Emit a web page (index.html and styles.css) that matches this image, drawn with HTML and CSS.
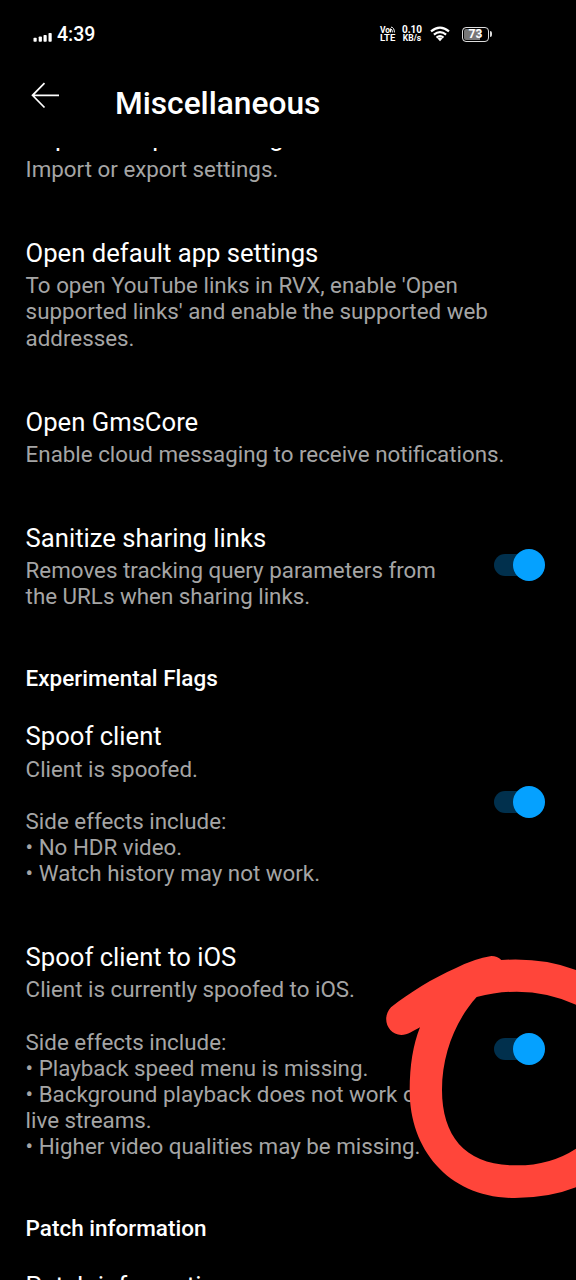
FILE: index.html
```html
<!DOCTYPE html>
<html lang="en">
<head>
<meta charset="utf-8">
<title>Miscellaneous</title>
<link rel="stylesheet" href="styles.css">
</head>
<body>
<div class="screen">
  <div class="status">
    <svg class="signal" width="20" height="12" viewBox="0 0 20 12" fill="#fff"><rect x=".5" y="6.800" width="3.200" height="4" rx=".8"/><rect x="5.700" y="5.500" width="3.200" height="5.300" rx=".8"/><rect x="10.500" y="4" width="3.200" height="6.800" rx=".8"/><rect x="15.500" y="2" width="3.200" height="8.800" rx=".8"/></svg>
    <span class="clock">4:39</span>
    <div class="tiny volte"><span class="vo">Vo<svg width="5" height="7" viewBox="0 0 6 7" fill="none" stroke="#fff" stroke-width="1.200"><path d="M.6 7V2.500M.6 2.600Q2.900 3 2.900 7M1.200 .6Q5.200 1 5.300 7"/></svg></span><span class="lte">LTE</span></div>
    <div class="tiny rate"><span class="num">0.10</span><span class="unit">KB/s</span></div>
    <svg class="wifi" width="20" height="16" viewBox="0 0 20 16" fill="none" stroke="#fff" stroke-width="2.200"><path d="M1 5.400Q10-2.200 19 5.400M3.900 8.700Q10 3.500 16.100 8.700M6.500 11.600Q10 8.800 13.500 11.600"/><path d="M7.500 12.500Q10 10.600 12.500 12.500L10 15.200Z" fill="#fff" stroke="none"/></svg>
    <div class="battery"><span>73</span></div>
  </div>
  <header class="bar">
    <svg class="back" width="30" height="28" viewBox="0 0 30 28" fill="none" stroke="#fff" stroke-width="1.700"><path d="M28 14.300H1.500M13.500 2.100L1.500 14.300L13.500 26.500"/></svg>
    <h1>Miscellaneous</h1>
  </header>
  <main class="list">
    <section class="item first"><div class="text"><h2>Import / Export settings</h2><p>Import or export settings.</p></div></section>
    <section class="item"><div class="text"><h2>Open default app settings</h2><p>To open YouTube links in RVX, enable 'Open<br>supported links' and enable the supported web<br>addresses.</p></div></section>
    <section class="item"><div class="text"><h2>Open GmsCore</h2><p>Enable cloud messaging to receive notifications.</p></div></section>
    <section class="item"><div class="text"><h2>Sanitize sharing links</h2><p>Removes tracking query parameters from<br>the URLs when sharing links.</p></div><div class="switch"></div></section>
    <h3>Experimental Flags</h3>
    <section class="item"><div class="text"><h2>Spoof client</h2><p>Client is spoofed.<br><br>Side effects include:<br>• No HDR video.<br>• Watch history may not work.</p></div><div class="switch"></div></section>
    <section class="item"><div class="text"><h2>Spoof client to iOS</h2><p>Client is currently spoofed to iOS.<br><br>Side effects include:<br>• Playback speed menu is missing.<br>• Background playback does not work on<br>live streams.<br>• Higher video qualities may be missing.</p></div><div class="switch"></div></section>
    <h3>Patch information</h3>
    <section class="item"><div class="text"><h2>Patch information</h2></div></section>
  </main>
  <svg class="scribble" width="200" height="270" viewBox="0 0 600 810"><path fill="#ff453a" d="M45 202C100 158 170 115 240 84Q295 56 346 48Q364 48 376 60Q500 52 600 90V194Q460 130 302 171C240 240 198 340 198 450C198 590 270 676 416 676Q520 678 600 626V742Q520 774 416 774C220 774 100 630 101 450Q101 340 132 262C110 274 96 284 76 285C35 284 15 234 45 202Z"/></svg>
</div>
</body>
</html>
```
FILE: styles.css
```css
* { box-sizing: border-box; }
body { margin: 0; background: #000; }
.screen {
  position: relative;
  display: flex;
  flex-direction: column;
  width: 576px;
  height: 1280px;
  overflow: hidden;
  background: #000;
  color: #fff;
  font-family: Roboto, sans-serif;
}
.status {
  display: flex;
  align-items: center;
  height: 68px;
  padding-left: 33px;
}
.signal { margin-top: 5px; }
.clock { width: 323px; margin-left: 4px; font-size: 19.5px; font-weight: 500; }
.tiny {
  display: flex;
  flex-direction: column;
  font-size: 9.5px;
  font-weight: 700;
  line-height: 8.5px;
}
.volte { width: 20px; }
.vo { font-size: 8.5px; white-space: nowrap; }
.rate { width: 24px; align-items: center; margin-right: 6px; }
.num { font-size: 10px; }
.unit { font-size: 8.5px; }
.wifi { margin-right: 12px; }
.battery {
  position: relative;
  width: 27px;
  height: 15px;
  border: 1.5px solid #ddd;
  border-radius: 4px;
  background: linear-gradient(90deg, #777 70%, #000 70%);
  box-shadow: inset 0 0 0 1px #000;
  font-size: 12px;
  font-weight: 700;
  line-height: 13px;
  text-align: center;
}
.battery::after {
  content: "";
  position: absolute;
  right: -3.5px;
  top: 3px;
  width: 2px;
  height: 6px;
  border-radius: 0 2px 2px 0;
  background: #ddd;
}
.bar { display: flex; height: 80px; padding: 13px 0 0 31px; }
.back { flex: none; }
.bar h1 { margin: 4px 0 0 54px; font-size: 31.7px; font-weight: 500; line-height: 38px; }
.list { flex: 1; overflow: hidden; }
.item { display: flex; align-items: center; padding: 28px 31px 28px 25.6px; }
.first { margin-top: -54.2px; }
.text { flex: 1; white-space: nowrap; }
h2 { margin: 0 0 4.2px; font-size: 25.63px; font-weight: 400; line-height: 30px; }
p { margin: 0; color: #a5a5a5; font-size: 22.35px; line-height: 26.13px; }
h3 { height: 56px; margin: 0; padding: 27.5px 0 0 25.6px; font-size: 22.5px; font-weight: 500; line-height: 26px; }
.switch { position: relative; width: 51px; height: 32px; margin-top: -3px; }
.switch::before {
  content: "";
  position: absolute;
  left: 0;
  top: 5px;
  width: 44px;
  height: 22px;
  border-radius: 11px;
  background: #01304d;
}
.switch::after {
  content: "";
  position: absolute;
  right: 0;
  top: 0;
  width: 32px;
  height: 32px;
  border-radius: 50%;
  background: #05a1ff;
}
.scribble { position: absolute; left: 376px; top: 940px; }
```
